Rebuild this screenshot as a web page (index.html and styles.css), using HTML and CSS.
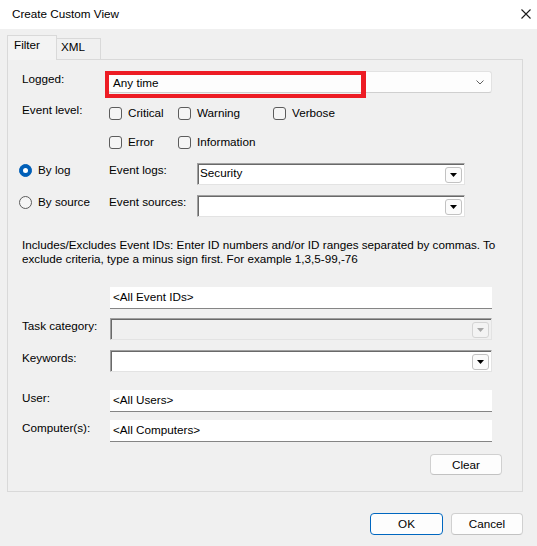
FILE: index.html
```html
<!DOCTYPE html>
<html>
<head>
<meta charset="utf-8">
<title>Create Custom View</title>
<link rel="stylesheet" href="styles.css">
</head>
<body>
<div class="window">
  <div class="titlebar">
    <span class="title">Create Custom View</span>
    <svg class="close" width="10" height="10" viewBox="0 0 10 10"><path d="M0.5 0.5 L9.5 9.5 M9.5 0.5 L0.5 9.5" stroke="#1a1a1a" stroke-width="1.1" fill="none"/></svg>
  </div>

  <div class="tabs">
    <div class="tab active">Filter</div>
    <div class="tab">XML</div>
  </div>

  <div class="panel">
    <div class="row row-logged">
      <span class="label lbl-main">Logged:</span>
      <div class="select">
        <span>Any time</span>
        <svg class="chev" width="8" height="5" viewBox="0 0 8 5"><path d="M0.5 0.5 L4 4 L7.5 0.5" stroke="#606060" stroke-width="1" fill="none"/></svg>
        <div class="highlight"></div>
      </div>
    </div>

    <div class="row row-level">
      <span class="label lbl-level">Event level:</span>
      <div class="checks">
        <label class="check"><span class="box"></span>Critical</label>
        <label class="check"><span class="box"></span>Warning</label>
        <label class="check"><span class="box"></span>Verbose</label>
        <label class="check"><span class="box"></span>Error</label>
        <label class="check"><span class="box"></span>Information</label>
      </div>
    </div>

    <div class="row row-log">
      <label class="radio-item"><span class="radio on"></span>By log</label>
      <span class="label lbl-sub">Event logs:</span>
      <div class="combo combo-short">
        <span class="combo-text">Security</span>
        <span class="dd"><svg width="7" height="4" viewBox="0 0 7 4"><path d="M0 0 H7 L3.5 4 Z" fill="#000"/></svg></span>
      </div>
    </div>

    <div class="row row-source">
      <label class="radio-item"><span class="radio"></span>By source</label>
      <span class="label lbl-sub">Event sources:</span>
      <div class="combo combo-short">
        <span class="combo-text"></span>
        <span class="dd"><svg width="7" height="4" viewBox="0 0 7 4"><path d="M0 0 H7 L3.5 4 Z" fill="#000"/></svg></span>
      </div>
    </div>

    <p class="note">Includes/Excludes Event IDs: Enter ID numbers and/or ID ranges separated by commas. To<br>exclude criteria, type a minus sign first. For example 1,3,5-99,-76</p>

    <div class="row row-ids">
      <div class="field field-ids">&lt;All Event IDs&gt;</div>
    </div>

    <div class="row row-task">
      <span class="label lbl-main">Task category:</span>
      <div class="combo combo-wide disabled">
        <span class="combo-text"></span>
        <span class="dd"><svg width="7" height="4" viewBox="0 0 7 4"><path d="M0 0 H7 L3.5 4 Z" fill="#a6a6a6"/></svg></span>
      </div>
    </div>

    <div class="row row-kw">
      <span class="label lbl-main">Keywords:</span>
      <div class="combo combo-wide">
        <span class="combo-text"></span>
        <span class="dd"><svg width="7" height="4" viewBox="0 0 7 4"><path d="M0 0 H7 L3.5 4 Z" fill="#000"/></svg></span>
      </div>
    </div>

    <div class="row row-user">
      <span class="label lbl-main">User:</span>
      <div class="field">&lt;All Users&gt;</div>
    </div>

    <div class="row row-comp">
      <span class="label lbl-main">Computer(s):</span>
      <div class="field">&lt;All Computers&gt;</div>
    </div>

    <div class="row row-clear">
      <button class="btn btn-clear">Clear</button>
    </div>
  </div>

  <div class="footer">
    <button class="btn btn-ok">OK</button>
    <button class="btn btn-cancel">Cancel</button>
  </div>
</div>
</body>
</html>
```

FILE: styles.css
```css
html, body {
  margin: 0;
  padding: 0;
}
body {
  background: #f0f0f0;
  font-family: "Liberation Sans", Arial, sans-serif;
  font-size: 11.7px;
  color: #000;
}
.window {
  width: 537px;
  height: 546px;
  background: #f0f0f0;
  box-sizing: border-box;
}
.titlebar {
  height: 29px;
  background: #fff;
  display: flex;
  align-items: center;
  justify-content: space-between;
  padding: 0 6px 0 12px;
  box-sizing: border-box;
}
.title {
  font-size: 11.7px;
  line-height: 16px;
  margin-top: -1px;
}
.close {
  display: block;
  margin-top: -1px;
}

/* tabs */
.tabs {
  display: flex;
  align-items: flex-end;
  padding-left: 7px;
  margin-top: 6px;
  height: 24px;
}
.tab {
  box-sizing: border-box;
  border: 1px solid #d9d9d9;
  border-bottom: none;
  background: #f0f0f0;
  line-height: 16px;
}
.tab.active {
  width: 50px;
  height: 25px;
  padding: 1px 0 0 6px;
  margin-bottom: -1px;
  position: relative;
  z-index: 1;
  background: #f3f3f3;
}
.tab:not(.active) {
  width: 44px;
  height: 21px;
  border-left: none;
  padding: 0 0 0 4px;
}

/* panel */
.panel {
  margin-left: 7px;
  width: 516px;
  height: 433px;
  box-sizing: border-box;
  border: 1px solid #d9d9d9;
  background: #f0f0f0;
  padding: 11px 30px 0 14px;
  display: flex;
  flex-direction: column;
}
.row {
  display: flex;
  align-items: flex-start;
}
.label {
  line-height: 16px;
  white-space: nowrap;
  flex: none;
}
.lbl-main { width: 88px; }

/* logged */
.row-logged { height: 22px; }
.row-logged .lbl-main { width: 86px; }
.select {
  position: relative;
  flex: 1;
  height: 22px;
  box-sizing: border-box;
  background: #fdfdfd;
  border: 1px solid #e2e2e2;
  border-bottom-color: #cfcfcf;
  border-radius: 3px;
  display: flex;
  align-items: center;
  justify-content: space-between;
  padding: 1px 7px 0 4px;
  line-height: 16px;
}
.chev { display: block; margin-top: 0; }
.highlight {
  position: absolute;
  left: -4px;
  top: -1px;
  width: 261px;
  height: 27px;
  box-sizing: border-box;
  border: 4px solid #ed1c24;
  border-right-width: 5px;
}

/* event level */
.row-level { margin-top: 12px; }
.lbl-level { width: 87px; margin-top: -3px; }
.checks {
  display: grid;
  grid-template-columns: 69px 95px auto;
  grid-auto-rows: 16px;
  row-gap: 13px;
}
.check {
  display: flex;
  align-items: center;
  gap: 6px;
  line-height: 16px;
  white-space: nowrap;
}
.box {
  width: 13px;
  height: 13px;
  box-sizing: border-box;
  border: 1px solid #5c5c5c;
  border-radius: 3px;
  background: #f5f5f5;
  flex: none;
}

/* log / source */
.row-log { margin-top: 13px; height: 22px; }
.row-source { margin-top: 10px; height: 22px; }
.radio-item {
  width: 90px;
  margin-left: -3px;
  display: flex;
  align-items: center;
  gap: 6px;
  height: 16px;
  margin-top: -1px;
  line-height: 16px;
  flex: none;
}
.radio {
  width: 13px;
  height: 13px;
  box-sizing: border-box;
  border-radius: 50%;
  border: 1px solid #5c5c5c;
  background: #f5f5f5;
  position: relative;
  flex: none;
}
.radio.on {
  background: #005fb8;
  border-color: #005fb8;
}
.radio.on::after {
  content: "";
  position: absolute;
  left: 3px;
  top: 3px;
  width: 5px;
  height: 5px;
  border-radius: 50%;
  background: #fff;
}
.lbl-sub { width: 88px; margin-top: -1px; }

.combo {
  height: 22px;
  box-sizing: border-box;
  background: #fff;
  border: 1px solid;
  border-color: #a0a0a0 #e3e3e3 #e3e3e3 #a0a0a0;
  box-shadow: inset 1px 1px 0 #696969;
  display: flex;
  align-items: center;
  justify-content: space-between;
  padding: 0 2px 0 2px;
  line-height: 16px;
}
.combo-text { white-space: nowrap; margin-top: -2px; }
.combo-short { width: 268px; }
.combo-wide { flex: 1; }
.combo.disabled { background: #f0f0f0; }
.dd {
  width: 17px;
  height: 16px;
  box-sizing: border-box;
  border: 1px solid #c2c2c2;
  border-radius: 3px;
  background: #fbfbfb;
  display: flex;
  align-items: center;
  justify-content: center;
  padding-top: 1px;
  margin-top: 1px;
}
.dd svg { display: block; }
.disabled .dd { border-color: #d4d4d4; background: #f3f3f3; }

/* note */
.note {
  margin: 21px 0 0 0;
  line-height: 14px;
  white-space: nowrap;
}

/* fields */
.row-ids { margin-top: 21px; }
.field {
  flex: 1;
  height: 22px;
  box-sizing: border-box;
  background: #fff;
  border-bottom: 1px solid #858585;
  padding: 2px 0 0 3px;
  line-height: 16px;
  white-space: nowrap;
}
.field-ids { margin-left: 88px; }
.row-task { margin-top: 9px; }
.row-kw { margin-top: 10px; }
.row-user { margin-top: 18px; }
.row-comp { margin-top: 8px; }

/* buttons */
.btn {
  font-family: inherit;
  font-size: 11.7px;
  color: #000;
  background: #fdfdfd;
  border: 1px solid #d0d0d0;
  border-bottom-color: #c2c2c2;
  border-radius: 4px;
  padding: 0;
  line-height: 16px;
  box-sizing: border-box;
}
.row-clear {
  margin-top: 12px;
  margin-right: -10px;
  justify-content: flex-end;
}
.btn-clear { width: 72px; height: 21px; }

.footer {
  display: flex;
  justify-content: flex-end;
  gap: 8px;
  padding-right: 14px;
  margin-top: 21px;
}
.btn-ok {
  width: 73px;
  height: 22px;
  border-color: #0067c0;
}
.btn-cancel {
  width: 72px;
  height: 22px;
}
```
